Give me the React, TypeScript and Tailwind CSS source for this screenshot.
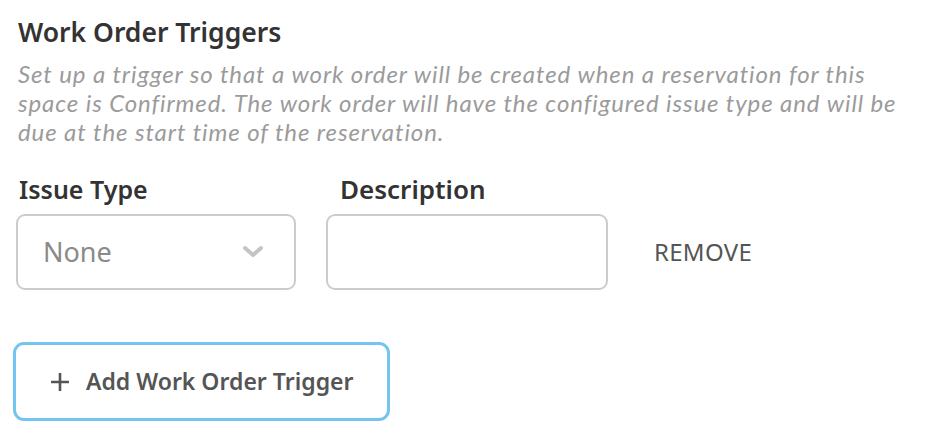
export default function App() {
  return (
    <div
      className="w-[928px] h-[437px] bg-white pl-[16px] pt-[14px]"
      style={{ fontFamily: '"Noto Sans", "Open Sans", sans-serif' }}
    >
      {/* Header */}
      <h2 className="pl-[2px] text-[26.5px] font-semibold leading-[36px] text-[#333333]">
        Work Order Triggers
      </h2>
      <p
        className="mt-[9px] pl-[2px] w-[910px] text-[24px] italic leading-[29px] tracking-[0.9px] text-[#9b9b9b]"
        style={{ fontFamily: '"Lato", "Noto Sans", sans-serif' }}
      >
        Set up a trigger so that a work order will be created when a reservation for this
        <br />
        space is Confirmed. The work order will have the configured issue type and will be
        <br />
        due at the start time of the reservation.
      </p>

      {/* Trigger row */}
      <div className="flex items-end mt-[27px]">
        <div className="flex flex-col w-[280px]">
          <label className="pl-[3px] text-[25px] font-semibold leading-[32px] text-[#333333]">
            Issue Type
          </label>
          <div className="mt-[9px] flex items-center justify-between h-[76px] rounded-[9px] border-2 border-[#cccccc] pl-[25px] pr-[30px]">
            <span className="text-[27px] text-[#8a8a8a]">None</span>
            <svg width="22" height="14" viewBox="0 0 22 14" fill="none">
              <path
                d="M3 3l8 7 8-7"
                stroke="#c4c4c4"
                strokeWidth="4"
                strokeLinecap="round"
                strokeLinejoin="round"
              />
            </svg>
          </div>
        </div>
        <div className="flex flex-col w-[282px] ml-[30px]">
          <label className="pl-[14px] text-[26px] font-semibold leading-[32px] text-[#333333]">
            Description
          </label>
          <input
            className="mt-[9px] h-[76px] rounded-[9px] border-2 border-[#cccccc] px-4 text-[20px] outline-none"
            type="text"
          />
        </div>
        <button className="ml-[46px] h-[76px] text-[24px] tracking-[0.3px] uppercase text-[#555555]">
          Remove
        </button>
      </div>

      {/* Add button */}
      <button className="mt-[52px] -ml-[3px] flex items-center w-[377px] h-[79px] rounded-[11px] border-[3px] border-[#73c4ee] pl-[34px]">
        <svg width="20" height="20" viewBox="0 0 20 20" fill="none">
          <path d="M10 1v18M1 10h18" stroke="#555555" strokeWidth="2.6" />
        </svg>
        <span className="ml-[16px] text-[23px] font-semibold text-[#555555]">
          Add Work Order Trigger
        </span>
      </button>
    </div>
  );
}
